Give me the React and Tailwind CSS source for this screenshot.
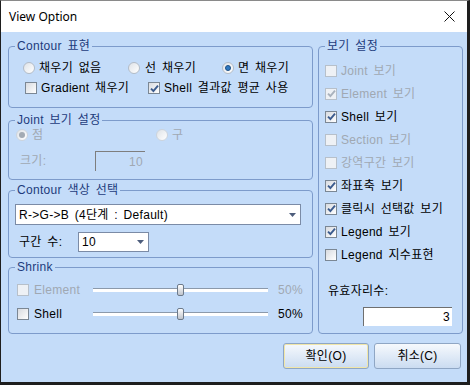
import React from "react";

const Check = ({ checked, disabled }) => (
  <span
    className={`w-[12px] h-[12px] shrink-0 border flex items-center justify-center ${
      disabled ? "border-[#b7c0ca] bg-[#eef1f5]" : "border-[#7b8794] bg-gradient-to-br from-[#d8dbe0] to-[#ffffff]"
    }`}
  >
    {checked && (
      <svg width="9" height="9" viewBox="0 0 9 9">
        <path d="M1 4.6 L3.4 7 L8 1.6" stroke={disabled ? "#a9b2bd" : "#3b5b8e"} strokeWidth="1.9" fill="none" />
      </svg>
    )}
  </span>
);

const Radio = ({ checked, disabled }) => (
  <span
    className={`w-[12px] h-[12px] shrink-0 rounded-full border flex items-center justify-center bg-gradient-to-br from-[#dfe3e8] to-[#ffffff] ${
      disabled ? "border-[#cdd4dc]" : "border-[#b3bcc7]"
    }`}
  >
    {checked && (
      <span className={`w-[6px] h-[6px] rounded-full ${disabled ? "bg-[#a3abb4]" : "bg-[#2f78c0] border border-[#1d4f86]"}`} />
    )}
  </span>
);

const Arrow = () => (
  <svg width="7" height="4" viewBox="0 0 7 4">
    <path d="M0 0 H7 L3.5 4 Z" fill="#4d5d7c" />
  </svg>
);

const Slider = () => (
  <div className="relative w-[175px] h-[14px] flex items-center">
    <div className="w-full h-[4px] border-t border-[#8b99ab] bg-white" />
    <span className="absolute left-[84px] top-[1px] w-[7px] h-[12px] rounded-[2px] border border-[#6d7a8a] bg-gradient-to-b from-[#ffffff] to-[#bfc4cc]" />
  </div>
);

export default function App() {
  return (
    <div className="w-[470px] h-[385px] flex flex-col border-l border-t border-r-[3px] border-b-[3px] border-[#1e1e1e] border-t-[#8a8a8a] text-[12px] text-black font-['Liberation_Sans','Noto_Sans_CJK_KR',sans-serif]">
      {/* Title bar */}
      <div className="h-[31px] shrink-0 bg-white flex items-center justify-between pl-[8px] pr-[12px]">
        <span className="font-['Noto_Sans','Noto_Sans_CJK_KR',sans-serif] text-[12px]">View Option</span>
        <svg width="11" height="11" viewBox="0 0 11 11">
          <path d="M0.5 0.5 L10.5 10.5 M10.5 0.5 L0.5 10.5" stroke="#111" strokeWidth="1" />
        </svg>
      </div>

      {/* Body */}
      <div className="flex-1 bg-[#c4dcf9] pt-[6px] pl-[7px] pr-[4px] flex flex-col tracking-[0.3px] [word-spacing:2px]">
        <div className="flex gap-[5px]">
          {/* Left column */}
          <div className="w-[305px] flex flex-col">
            <fieldset className="h-[70px] border border-[#7d9bcb] rounded-[4px]">
              <legend className="ml-[6px] px-[2px] leading-[16px] text-[#1d3b7c]">Contour 표현</legend>
              <div className="mt-[6px] h-[16px] flex items-center pl-[14px]">
                <label className="w-[105px] flex items-center gap-[4px]">
                  <Radio />
                  <span>채우기 없음</span>
                </label>
                <label className="w-[94px] flex items-center gap-[5px]">
                  <Radio />
                  <span>선 채우기</span>
                </label>
                <label className="flex items-center gap-[4px]">
                  <Radio checked />
                  <span>면 채우기</span>
                </label>
              </div>
              <div className="mt-[4px] h-[16px] flex items-center pl-[16px]">
                <label className="w-[123px] flex items-center gap-[4px]">
                  <Check />
                  <span>Gradient 채우기</span>
                </label>
                <label className="flex items-center gap-[4px]">
                  <Check checked />
                  <span>Shell 결과값 평균 사용</span>
                </label>
              </div>
            </fieldset>

            <fieldset className="mt-[4px] h-[68px] border border-[#7d9bcb] rounded-[4px]">
              <legend className="ml-[6px] px-[2px] leading-[16px] text-[#1d3b7c]">Joint 보기 설정</legend>
              <div className="h-[14px] flex items-center pl-[7px] text-[#a0a8b2]">
                <label className="w-[140px] flex items-center gap-[4px]">
                  <Radio checked disabled />
                  <span>점</span>
                </label>
                <label className="flex items-center gap-[4px]">
                  <Radio disabled />
                  <span>구</span>
                </label>
              </div>
              <div className="mt-[9px] h-[20px] flex items-center pl-[11px] text-[#a0a8b2]">
                <span className="w-[75px]">크기:</span>
                <div className="w-[50px] h-[20px] border-t border-l border-[#7e7e7e] border-b-[#eef3fa] border-r-[#eef3fa] flex items-center justify-end pr-[2px]">
                  10
                </div>
              </div>
            </fieldset>

            <fieldset className="mt-[2px] h-[76px] border border-[#7d9bcb] rounded-[4px]">
              <legend className="ml-[6px] px-[2px] leading-[16px] text-[#1d3b7c]">Contour 색상 선택</legend>
              <div className="mt-[6px] ml-[6px] w-[286px] h-[21px] bg-white border border-[#7b8ba6] flex items-center justify-between pl-[3px] pr-[4px]">
                <span>R-&gt;G-&gt;B (4단계 : Default)</span>
                <Arrow />
              </div>
              <div className="mt-[7px] h-[20px] flex items-center pl-[10px]">
                <span className="w-[59px]">구간 수:</span>
                <div className="w-[71px] h-[20px] bg-white border border-[#7b8ba6] flex items-center justify-between pl-[3px] pr-[4px]">
                  <span>10</span>
                  <Arrow />
                </div>
              </div>
            </fieldset>

            <fieldset className="mt-[1px] h-[75px] border border-[#7d9bcb] rounded-[4px]">
              <legend className="ml-[6px] px-[2px] leading-[16px] text-[#1d3b7c]">Shrink</legend>
              <div className="mt-[7px] h-[16px] flex items-center pl-[8px]">
                <label className="w-[76px] flex items-center gap-[5px] text-[#a0a8b2]">
                  <Check disabled />
                  <span>Element</span>
                </label>
                <Slider />
                <span className="w-[35px] text-right text-[#a0a8b2]">50%</span>
              </div>
              <div className="mt-[8px] h-[16px] flex items-center pl-[8px]">
                <label className="w-[76px] flex items-center gap-[5px]">
                  <Check />
                  <span>Shell</span>
                </label>
                <Slider />
                <span className="w-[35px] text-right">50%</span>
              </div>
            </fieldset>
          </div>

          {/* Right column */}
          <fieldset className="w-[145px] h-[296px] border border-[#7d9bcb] rounded-[4px]">
            <legend className="ml-[6px] px-[2px] leading-[16px] text-[#1d3b7c]">보기 설정</legend>
            <div className="mt-[5px] pl-[6px] flex flex-col">
              {[
                { label: "Joint 보기", checked: false, disabled: true },
                { label: "Element 보기", checked: true, disabled: true },
                { label: "Shell 보기", checked: true },
                { label: "Section 보기", checked: false, disabled: true },
                { label: "강역구간 보기", checked: false, disabled: true },
                { label: "좌표축 보기", checked: true },
                { label: "클릭시 선택값 보기", checked: true },
                { label: "Legend 보기", checked: true },
                { label: "Legend 지수표현", checked: false },
              ].map((item) => (
                <label
                  key={item.label}
                  className={`h-[23px] flex items-center gap-[4px] ${item.disabled ? "text-[#a0a8b2]" : ""}`}
                >
                  <Check checked={item.checked} disabled={item.disabled} />
                  <span>{item.label}</span>
                </label>
              ))}
            </div>
            <div className="mt-[17px] pl-[9px] leading-[16px]">유효자리수:</div>
            <div className="mt-[8px] ml-[44px] w-[89px] h-[19px] bg-white border-t border-l border-[#6f6f6f] border-b-[#f4f7fb] border-r-[#f4f7fb] flex items-center justify-end pr-[2px]">
              3
            </div>
          </fieldset>
        </div>

        {/* Buttons */}
        <div className="mt-[9px] flex justify-end gap-[5px] pr-[2px]">
          <button className="w-[86px] h-[26px] rounded-[3px] border border-[#8fa6c4] shadow-[inset_0_0_0_1px_#f1e6a8] bg-gradient-to-b from-[#f6f9fd] to-[#cbdcf1]">
            확인(O)
          </button>
          <button className="w-[87px] h-[26px] rounded-[3px] border border-[#8fa6c4] bg-gradient-to-b from-[#f6f9fd] to-[#cbdcf1]">
            취소(C)
          </button>
        </div>
      </div>
    </div>
  );
}
